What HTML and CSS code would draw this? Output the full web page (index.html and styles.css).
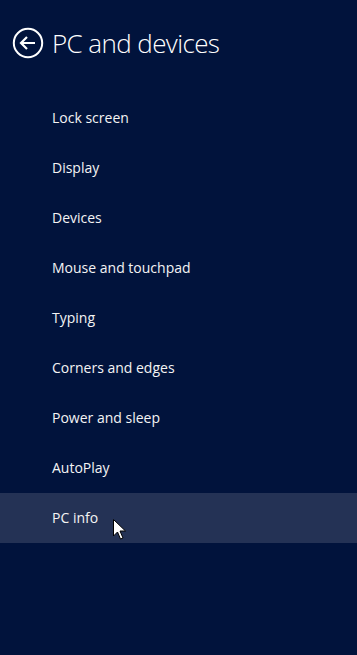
FILE: index.html
```html
<!DOCTYPE html>
<html lang="en">

<head>
  <meta charset="UTF-8" />
  <meta name="viewport" content="width=device-width, initial-scale=1.0" />
  <title>PC and devices</title>
  <link rel="stylesheet" href="styles.css">
</head>

<body>
  <div class="settings-pane">
    <div class="pane-header">
      <span class="back-btn">
        <svg width="32" height="32" viewBox="0 0 32 32">
          <circle cx="16" cy="16" r="14.2" fill="none" stroke="#fff" stroke-width="2" />
          <path d="M9 16 H23 M15 10 L9 16 L15 22" fill="none" stroke="#fff" stroke-width="2.2" />
        </svg>
      </span>
      <h2>PC and devices</h2>
    </div>
    <ul class="nav-list">
      <li>Lock screen</li>
      <li>Display</li>
      <li>Devices</li>
      <li>Mouse and touchpad</li>
      <li>Typing</li>
      <li>Corners and edges</li>
      <li>Power and sleep</li>
      <li>AutoPlay</li>
      <li class="hover">PC info
        <svg class="cursor" width="14" height="22" viewBox="0 0 14 22">
          <path d="M0.5 0.5 V17 L4.5 13 L7.5 20 L10 19 L7 12 H12.5 Z" fill="#fff" stroke="#000" stroke-width="1" />
        </svg>
      </li>
    </ul>
  </div>
</body>

</html>
```

FILE: styles.css
```css
body {
  margin: 0;
  background-color: #01133c;
  color: #fff;
  font-family: 'Open Sans', 'Noto Sans', sans-serif;
}

.settings-pane {
  width: 357px;
  height: 655px;
}

.pane-header {
  display: flex;
  align-items: center;
  height: 86px;
  padding-left: 12px;
}

.back-btn {
  display: flex;
  width: 32px;
  height: 32px;
  margin-right: 8px;
}

.pane-header h2 {
  margin: 0;
  font-size: 26px;
  font-weight: 300;
  letter-spacing: -0.6px;
}

.nav-list {
  list-style: none;
  margin: 7px 0 0;
  padding: 0;
}

.nav-list li {
  position: relative;
  height: 50px;
  line-height: 50px;
  padding-left: 52px;
  font-size: 14px;
  color: #f4f4f4;
}

.nav-list li.hover {
  background-color: #243255;
}

.cursor {
  position: absolute;
  left: 113px;
  top: 26px;
}
```
